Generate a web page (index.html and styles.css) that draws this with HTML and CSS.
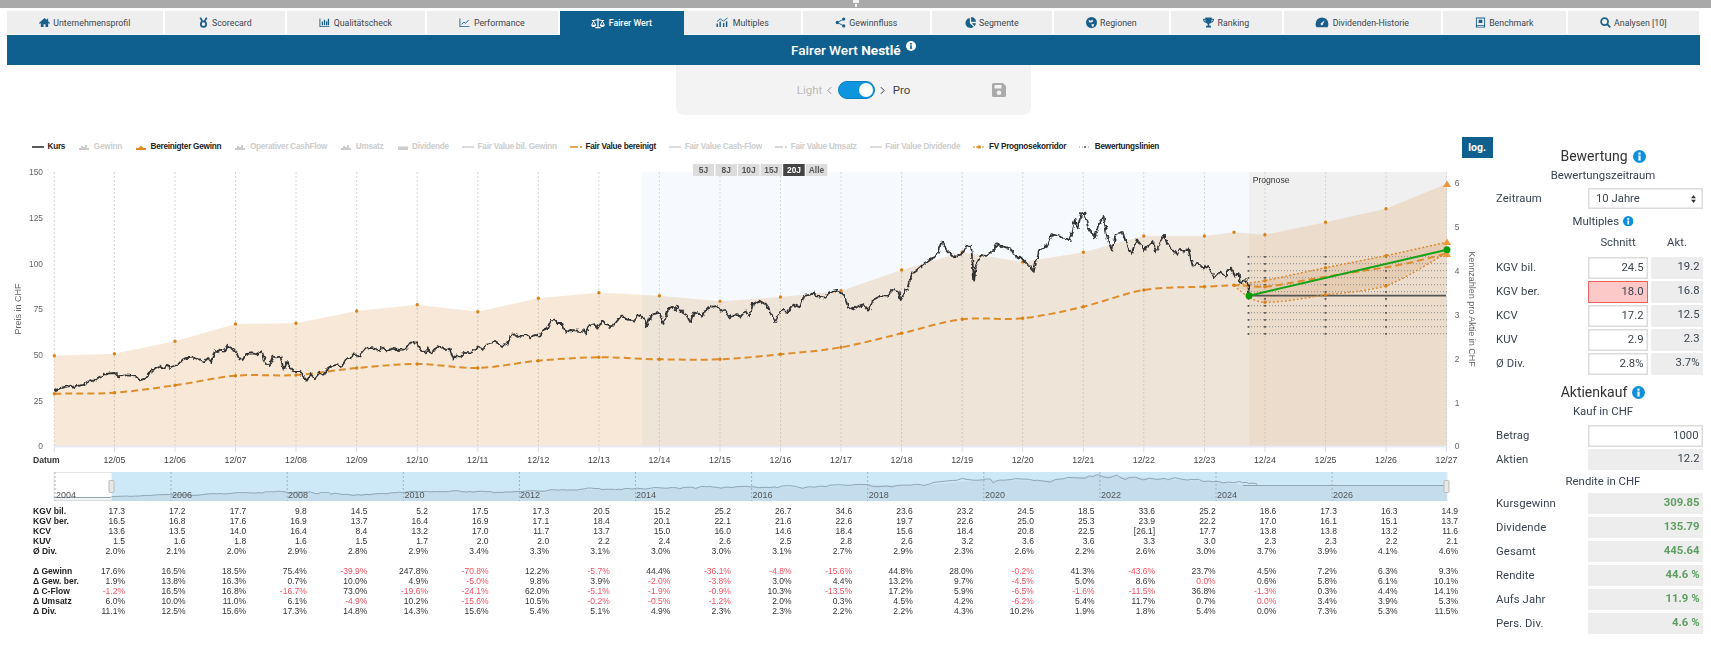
FILE: index.html
```html
<!DOCTYPE html>
<html lang="de">
<head>
<meta charset="utf-8">
<title>Fairer Wert Nestlé</title>
<link rel="stylesheet" href="styles.css">
</head>
<body>
<svg class="defs" width="0" height="0" aria-hidden="true">
  <filter id="jitter" x="-2%" y="-10%" width="104%" height="120%"><feTurbulence type="fractalNoise" baseFrequency=".28 .2" numOctaves="2" seed="4"/><feDisplacementMap in="SourceGraphic" scale="4.500" xChannelSelector="R" yChannelSelector="G"/></filter>
  <symbol id="info" viewBox="0 0 12 12"><circle cx="6" cy="6" r="6"/><g class="info-i"><rect x="5" y="2.3" width="2" height="2"/><rect x="5" y="5.1" width="2" height="4.6"/></g></symbol>
  <symbol id="lg-area" viewBox="0 0 12 8"><path d="M1 7V5h2V3h2v1h2V2h2v3h2v2z"/></symbol>
  <symbol id="lg-flat" viewBox="0 0 12 8"><path d="M1 3.5h10v3.5H1z"/></symbol>
  <g id="price">
    <path class="ps" transform="matrix(.3827 0 0 .3333 0 160)" d="M142 693L150 688 160 684 172 680 185 677 192 684 205 677 218 675 225 668 237 660 245 664 258 652 270 645 285 640 300 639 312 652 322 646 340 647 355 650 365 661 378 656 390 640 405 625 418 617 428 624 438 615 446 624 462 618 478 598 490 594 505 593 520 598 532 606 544 594 552 606 562 570 570 576 578 569 585 575 595 557 605 566 615 572 625 597 634 600 643 582 660 580 672 583 684 574 695 610 704 618 712 590 722 592 733 590 741 632 750 606 760 622 770 636 785 636 793 650 802 662 812 642 822 656 835 638 845 644 858 626 868 618 880 615 893 620 905 596 918 592 925 580 935 590 945 580 958 562 975 565 988 572 1000 562 1012 574 1025 566 1040 570 1060 568 1072 548 1088 547 1097 570 1110 578 1120 565 1124 582 1135 568 1150 557 1165 570 1175 566 1185 598 1195 585 1205 592 1215 575 1232 578 1250 562 1262 568 1275 550 1295 546 1312 558 1325 555 1335 528 1345 522 1358 532 1372 522 1385 532 1400 525 1410 530 1420 510 1430 505 1440 480 1450 482 1458 492 1470 492 1478 518 1490 510 1510 512 1515 518"/>
    <path class="ps" transform="matrix(.3827 0 0 .3333 580 160)" d="M0 518L10 508 15 520 25 495 35 490 45 506 58 484 72 498 82 503 95 486 108 467 125 478 140 485 155 465 168 478 175 500 185 465 208 458 218 492 232 445 242 440 250 450 255 438 268 458 278 465 288 486 298 458 310 460 318 470 330 448 345 440 358 438 368 452 375 448 390 472 410 462 420 470 432 452 442 472 452 432 468 422 488 435 498 460 510 486 522 456 532 450 540 460 558 434 575 442 585 408 600 405 610 398 622 410 642 413 650 398 668 390 680 395 690 405 700 440 715 448 725 440 740 432 755 452 765 420 785 408 805 410 815 390 832 395 838 420 855 385 868 340 880 330 900 310 918 296 930 290 945 245 958 270 975 288 985 290 1000 280 1010 260 1022 260 1030 362 1035 315 1048 285 1060 288 1080 270 1090 250 1105 260 1125 265 1140 295 1150 290 1165 308 1185 335 1200 270 1220 255 1232 222 1250 228 1280 240 1292 180 1300 205 1310 160 1318 158 1328 205 1345 232 1358 185 1368 168 1378 235 1390 272 1400 222 1418 216 1430 262 1440 282 1455 238 1475 270 1498 245 1505 278 1525 225 1540 260 1560 285 1568 265"/>
    <path class="ps" transform="matrix(.3333 0 0 .3333 1140 160)" d="M120 268L130 275 145 268 158 318 175 310 190 325 205 318 222 352 238 335 255 350 272 320 282 350 296 340 300 368 315 360 325 372 327 405"/>
  </g>
</svg>

<div class="topbar"><svg class="grip" viewBox="0 0 6 7"><path d="M0 0h6v3H0zM2 4h2v3H2z"/></svg></div>

<nav class="tabs">
  <a class="tab"><svg class="ti" viewBox="0 0 12 12"><path d="M6 1L0 6.5l1 1 1-.9V11h3V8h2v3h3V6.6l1 .9 1-1-2-1.8V2H8.5v1.4z"/></svg>Unternehmensprofil</a>
  <a class="tab"><svg class="ti" viewBox="0 0 12 12"><path class="st" d="M2.5 .6L4.6 4.6M9.500 .6L7.400 4.600"/><circle class="st" cx="6" cy="7.800" r="2.900"/></svg>Scorecard</a>
  <a class="tab"><svg class="ti" viewBox="0 0 12 12"><path d="M.5 1.500h1v8.500h10v1H.5zM3 5h1.400v4H3zM5.300 3h1.400v6H5.300zM7.600 4.500H9V9H7.600zM9.600 2H11v7H9.600z"/></svg>Qualitätscheck</a>
  <a class="tab"><svg class="ti" viewBox="0 0 12 12"><path d="M.5 1.500h1v8.500h10v1H.5z"/><path class="st thin" d="M3 8l2.500-2.500 1.500 1.500 3.500-3.800"/></svg>Performance</a>
  <a class="tab on"><svg class="ti wide" viewBox="0 0 16 12"><path d="M7.300 0h1.400v1.200l4 .8h2.300v1h-1.600l2.400 4.700c0 1.500-1.500 2.300-2.800 2.300s-2.800-.8-2.800-2.300L12.600 3 8.700 2.300V10h2.300v1.500H5V10h2.300V2.300L3.400 3l2.400 4.700C5.800 9.200 4.300 10 3 10S.2 9.200.2 7.700L2.600 3H1V2h2.300l4-.8zM3 4.300L1.400 7.500h3.200zM13 4.300l-1.600 3.200h3.200z"/></svg>Fairer Wert</a>
  <a class="tab"><svg class="ti wide" viewBox="0 0 14 12"><path d="M1 7h1.600v4H1zM4.200 5h1.600v6H4.200zM8 6.500h1.600V11H8zM11.200 4.500h1.600V11h-1.600z"/><path class="st thin" d="M1.500 5L5 2l3.500 2.500L13 1"/></svg>Multiples</a>
  <a class="tab"><svg class="ti" viewBox="0 0 12 12"><circle cx="2.500" cy="6" r="1.800"/><circle cx="9.500" cy="2.300" r="1.800"/><circle cx="9.500" cy="9.700" r="1.800"/><path class="st thin" d="M2.500 6l7-3.700M2.500 6l7 3.700"/></svg>Gewinnfluss</a>
  <a class="tab"><svg class="ti" viewBox="0 0 12 12"><path d="M5.300 1v5.700l4.200 4A5.500 5.500 0 1 1 5.300 1zM6.700 0A5.300 5.300 0 0 1 12 5.300H6.700zM7.300 6.700H12a5.500 5.500 0 0 1-1.500 3.200z"/></svg>Segmente</a>
  <a class="tab"><svg class="ti" viewBox="0 0 12 12"><path fill-rule="evenodd" d="M6 0a6 6 0 1 1 0 12A6 6 0 0 1 6 0zM3 3l2 1 2-1 1 1.500-2 1.500H4L3 4.500zM6 7.500l3 .5-1 2.500H6.500z"/></svg>Regionen</a>
  <a class="tab"><svg class="ti" viewBox="0 0 12 12"><path fill-rule="evenodd" d="M2.500 .5h7v1.300H12C12 4.500 10.500 6 8.800 6.300 8 7 7.200 7.300 6.900 7.400V9.500h1.800V11.500H3.300V9.500h1.800V7.400C4.800 7.300 4 7 3.200 6.300 1.500 6 0 4.500 0 1.800h2.500zM1.200 3c.2 1 .8 1.700 1.800 2.100-.2-.6-.4-1.300-.5-2.100zM10.800 3H9.500c-.1.800-.3 1.500-.5 2.100 1-.4 1.600-1.100 1.800-2.100z"/></svg>Ranking</a>
  <a class="tab"><svg class="ti wide" viewBox="0 0 14 12"><path fill-rule="evenodd" d="M7 .5a7 7 0 0 1 7 7c0 1.400-.3 2.700-1 3.800H1C.3 10.200 0 8.900 0 7.500a7 7 0 0 1 7-7zM6.200 6.500a1.300 1.300 0 1 0 1.900 1L10 3.500z"/></svg>Dividenden-Historie</a>
  <a class="tab"><svg class="ti" viewBox="0 0 12 12"><path fill-rule="evenodd" d="M1 .5h10v11H1zM2 1.500v7.500h8V1.500zM2.300 9.800v.8h7.400v-.8zM4 3h4v3.500H4z"/></svg>Benchmark</a>
  <a class="tab"><svg class="ti" viewBox="0 0 12 12"><circle class="st" cx="5" cy="5" r="3.800"/><path class="st" d="M7.800 7.800l3.400 3.400"/></svg>Analysen [10]</a>
</nav>

<header class="banner">
  <h1 class="title">Fairer Wert <strong>Nestlé</strong></h1>
  <svg class="title-info"><use href="#info"/></svg>
</header>

<div class="mode-wrap">
  <div class="mode">
    <span class="mode-light">Light</span>
    <svg class="chev light" viewBox="0 0 6 10"><path d="M5 1L1 5l4 4"/></svg>
    <span class="switch"><span class="knob"></span></span>
    <svg class="chev" viewBox="0 0 6 10"><path d="M1 1l4 4-4 4"/></svg>
    <span class="mode-pro">Pro</span>
    <svg class="save" viewBox="0 0 14 14"><path fill-rule="evenodd" d="M1.500 0H11l3 3v9.500a1.500 1.500 0 0 1-1.500 1.500h-11A1.500 1.500 0 0 1 0 12.500v-11A1.500 1.500 0 0 1 1.500 0zM2.500 2v3.500h7V2zM7 7.500a2.300 2.300 0 1 0 0 4.600 2.300 2.300 0 0 0 0-4.600z"/></svg>
  </div>
</div>

<main class="main">
  <section class="left">
    <div class="legend">
      <span class="li on"><svg class="lg"><path class="k2" d="M0 4h12"/></svg>Kurs</span>
      <span class="li"><svg class="lg off"><use href="#lg-area"/></svg>Gewinn</span>
      <span class="li on"><svg class="lg" viewBox="0 0 12 8"><path class="of" d="M1 7V5h2.500L6 2.500 8.500 5H11v2z"/></svg>Bereinigter Gewinn</span>
      <span class="li"><svg class="lg off"><use href="#lg-area"/></svg>Operativer CashFlow</span>
      <span class="li"><svg class="lg off"><use href="#lg-area"/></svg>Umsatz</span>
      <span class="li"><svg class="lg off"><use href="#lg-flat"/></svg>Dividende</span>
      <span class="li"><svg class="lg"><path class="g2" d="M0 4h12"/></svg>Fair Value bil. Gewinn</span>
      <span class="li on"><svg class="lg"><path class="o2" d="M0 4h8M10 4h2"/></svg>Fair Value bereinigt</span>
      <span class="li"><svg class="lg"><path class="g2" d="M0 4h12"/></svg>Fair Value Cash-Flow</span>
      <span class="li"><svg class="lg"><path class="g2" d="M0 4h8M10 4h2"/></svg>Fair Value Umsatz</span>
      <span class="li"><svg class="lg"><path class="g2" d="M0 4h12"/></svg>Fair Value Dividende</span>
      <span class="li on"><svg class="lg"><path class="o1" d="M0 4h12"/><circle class="of" cx="6" cy="4" r="1.800"/></svg>FV Prognosekorridor</span>
      <span class="li on"><svg class="lg"><path class="d1" d="M0 4h12"/><circle cx="6" cy="4" r="1"/></svg>Bewertungslinien</span>
      <button class="log">log.</button>
    </div>

    <svg class="chart" viewBox="0 160 1480 345" width="1480" height="345" role="img" aria-label="Kursverlauf">
      <rect class="band-blue" x="642" y="172" width="607" height="274"/>
      <rect class="band-grey" x="1249" y="172" width="198" height="274"/>
      <path class="grid" d="M54.300 172V446M114.400 172V446M175 172V446M235.500 172V446M296 172V446M356.700 172V446M417.200 172V446M477.800 172V446M538.300 172V446M598.900 172V446M659.400 172V446M720 172V446M780.500 172V446M841 172V446M901.600 172V446M962.200 172V446M1022.700 172V446M1083.300 172V446M1143.800 172V446M1204.400 172V446M1264.900 172V446M1325.500 172V446M1386 172V446M1446.500 172V446"/>
      <path class="area" d="M54.300 355.700L114.400 353.700 175 341.300 235.500 324 296 323.300 356.700 311 417.200 304.700 477.800 311.700 538.300 298.300 598.900 292.700 659.400 295.700 720 301.300 780.500 297 841 290.700 901.600 270 962.200 252.300 1022.700 262 1083.300 252.300 1143.800 236 1204.400 236 1234 232.300 1264.900 234.700 1325.500 222.300 1386 208.700 1446.500 184V446H54.300z"/>
      <path class="axis" d="M54 446.500H1447"/>
      <path class="ticks" d="M54.300 447v5M114.400 447v5M175 447v5M235.500 447v5M296 447v5M356.700 447v5M417.200 447v5M477.800 447v5M538.300 447v5M598.900 447v5M659.400 447v5M720 447v5M780.500 447v5M841 447v5M901.600 447v5M962.200 447v5M1022.700 447v5M1083.300 447v5M1143.800 447v5M1204.400 447v5M1264.900 447v5M1325.500 447v5M1386 447v5M1446.500 447v5"/>

      <path class="corr-fill" d="M1234 285.300L1264.900 280.700 1325.500 267.700 1386 255.700 1446.500 242.300V253.300L1386 286 1325.500 294.700 1264.900 302.300z"/>
      <path class="lines" d="M1248 256.700H1447M1248 263.700H1447M1248 270.700H1447M1248 277.700H1447M1248 284.700H1447M1248 291.700H1447M1248 305.700H1447M1248 312.700H1447M1248 319.700H1447M1248 326.700H1447M1248 333.700H1447"/>
      <path class="lines-mk" d="M1265 256V335M1325.500 256V335M1386 256V335M1248.500 256V335"/>
      <path class="flat" d="M1249 295.700H1446"/>

      <path class="fv" d="M54.300 393.700C74 393.400 94.400 394.100 114.400 392.700S155 388.100 175 385.300 215.500 377.400 235.500 375.700 276 376.300 296 375 336.700 369.800 356.700 368 397.200 364 417.200 364 457.800 368.500 477.800 368 518.300 362.500 538.300 360.700 578.900 357.500 598.900 357.300 639.400 359 659.400 359.300 700 360.100 720 359.300 760.500 356.300 780.500 354.300 821 350.800 841 347.300 881.600 338 901.600 333.300 942.200 321.800 962.200 319.300 1002.700 320.400 1022.700 318.300 1063.300 311.400 1083.300 306.700 1123.800 293.300 1143.800 290 1184.400 287.500 1204.400 286.700 1224 285.500 1234 285.300 1255 287 1264.900 286.700 1305 280 1325.500 276.700 1365 270.500 1386 267.300 1430 258 1446.500 253.300"/>
      <path class="corr" d="M1234 285.300L1264.900 280.700 1325.500 267.700 1386 255.700 1446.500 242.300M1234 285.300C1245 296 1255 302 1264.900 302.300 1285 302 1305 298 1325.500 294.700 1345 293 1365 291 1386 286 1410 276 1430 262 1446.500 253.300"/>
      <path class="dots" d="M54.300 355.700h0M114.400 353.700h0M175 341.300h0M235.500 324h0M296 323.300h0M356.700 311h0M417.200 304.700h0M477.800 311.700h0M538.300 298.300h0M598.900 292.700h0M659.400 295.700h0M720 301.300h0M780.500 297h0M841 290.700h0M901.600 270h0M962.200 252.300h0M1022.700 262h0M1083.300 252.300h0M1143.800 236h0M1204.400 236h0M1234 232.300h0M1264.900 234.700h0M1325.500 222.300h0M1386 208.700h0M54.300 393.700h0M114.400 392.700h0M175 385.300h0M235.500 375.700h0M296 375h0M356.700 368h0M417.200 364h0M477.800 368h0M538.300 360.700h0M598.900 357.300h0M659.400 359.300h0M720 359.300h0M780.500 354.300h0M841 347.300h0M901.600 333.300h0M962.200 319.300h0M1022.700 318.300h0M1083.300 306.700h0M1143.800 290h0M1204.400 286.700h0M1234 285.300h0M1264.900 280.700h0M1325.500 267.700h0M1386 255.700h0M1264.900 302.300h0M1325.500 294.700h0M1386 286h0M1264.900 286.700h0"/>
      <use href="#price" class="kurs"/>
      <path class="green" d="M1249 295.700L1447 249.700"/>
      <circle class="green-dot" cx="1249" cy="295.700" r="3.500"/>
      <path class="tri" d="M1447 180.500l4 6.500h-8zM1447 238.500l4 6.500h-8zM1447 250.500l4 6.500h-8z"/>
      <circle class="green-dot" cx="1447" cy="249.700" r="3.500"/>

      <text class="tt" x="1252.700" y="182.500">Prognose</text>

      <g class="rs">
        <rect x="693" y="164" width="21" height="12"/><text x="703.500" y="173">5J</text>
        <rect x="715.500" y="164" width="21.500" height="12"/><text x="726.200" y="173">8J</text>
        <rect x="738" y="164" width="21.500" height="12"/><text x="748.700" y="173">10J</text>
        <rect x="760.600" y="164" width="21.500" height="12"/><text x="771.300" y="173">15J</text>
        <rect class="sel" x="783.200" y="164" width="21.500" height="12"/><text class="sel" x="794" y="173">20J</text>
        <rect x="805.800" y="164" width="21.500" height="12"/><text x="816.500" y="173">Alle</text>
      </g>

      <g class="yl">
        <text x="43" y="175">150</text><text x="43" y="221">125</text><text x="43" y="267">100</text><text x="43" y="312">75</text><text x="43" y="358">50</text><text x="43" y="404">25</text><text x="43" y="449">0</text>
      </g>
      <g class="yr">
        <text x="1457" y="186">6</text><text x="1457" y="230">5</text><text x="1457" y="274">4</text><text x="1457" y="318">3</text><text x="1457" y="362">2</text><text x="1457" y="406">1</text><text x="1457" y="449">0</text>
      </g>
      <text class="yt" transform="translate(21 309) rotate(-90)">Preis in CHF</text>
      <text class="yt" transform="translate(1469 309) rotate(90)">Kennzahlen pro Aktie in CHF</text>

      <text class="datum" x="33" y="463">Datum</text>
      <g class="xl">
        <text x="114.400" y="463">12/05</text><text x="175" y="463">12/06</text><text x="235.500" y="463">12/07</text><text x="296" y="463">12/08</text><text x="356.700" y="463">12/09</text><text x="417.200" y="463">12/10</text><text x="477.800" y="463">12/11</text><text x="538.300" y="463">12/12</text><text x="598.900" y="463">12/13</text><text x="659.400" y="463">12/14</text><text x="720" y="463">12/15</text><text x="780.500" y="463">12/16</text><text x="841" y="463">12/17</text><text x="901.600" y="463">12/18</text><text x="962.200" y="463">12/19</text><text x="1022.700" y="463">12/20</text><text x="1083.300" y="463">12/21</text><text x="1143.800" y="463">12/22</text><text x="1204.400" y="463">12/23</text><text x="1264.900" y="463">12/24</text><text x="1325.500" y="463">12/25</text><text x="1386" y="463">12/26</text><text x="1446.500" y="463">12/27</text>
      </g>

      <rect class="nav-bg" x="54" y="472.500" width="1393" height="28"/>
      <rect class="nav-sel" x="111.600" y="472" width="1335" height="29"/>
      <path class="nav-area" d="M54 497.500L111 497.300 169 494.500 227 493.700 285 491.800 343 494.400 401 492.300 459 490.800 517 491.600 575 489.900 633 489.300 692 487.200 750 486.600 808 487.700 866 484.600 924 485.300 982 480 1040 480.700 1098 475 1156 478.600 1214 481.400 1243 485 1447 485.500V501H54z"/>
      <path class="nav-grid" d="M55 472V501M171 472V501M287.200 472V501M403.300 472V501M519.400 472V501M635.500 472V501M751.600 472V501M867.700 472V501M983.800 472V501M1099.900 472V501M1216 472V501M1332.100 472V501"/>
      <path class="nav-line" d="M54 497.500H111"/>
      <use href="#price" class="nav-price" transform="matrix(.9587 0 0 .1226 59.500 448.800)"/>
      <path class="nav-line" d="M1243 485.500H1447"/>
      <g class="nl">
        <text x="56" y="498">2004</text><text x="172" y="498">2006</text><text x="288" y="498">2008</text><text x="404.500" y="498">2010</text><text x="520" y="498">2012</text><text x="636" y="498">2014</text><text x="752.600" y="498">2016</text><text x="868.800" y="498">2018</text><text x="985" y="498">2020</text><text x="1101" y="498">2022</text><text x="1217" y="498">2024</text><text x="1333" y="498">2026</text>
      </g>
      <rect class="nav-h" x="109" y="480.500" width="5" height="12" rx="1"/>
      <rect class="nav-h" x="1444" y="480.500" width="5" height="12" rx="1"/>
    </svg>

    <div class="tbl">
      <div class="tr"><b>KGV bil.</b><span>17.3</span><span>17.2</span><span>17.7</span><span>9.8</span><span>14.5</span><span>5.2</span><span>17.5</span><span>17.3</span><span>20.5</span><span>15.2</span><span>25.2</span><span>26.7</span><span>34.6</span><span>23.6</span><span>23.2</span><span>24.5</span><span>18.5</span><span>33.6</span><span>25.2</span><span>18.6</span><span>17.3</span><span>16.3</span><span>14.9</span></div>
      <div class="tr"><b>KGV ber.</b><span>16.5</span><span>16.8</span><span>17.6</span><span>16.9</span><span>13.7</span><span>16.4</span><span>16.9</span><span>17.1</span><span>18.4</span><span>20.1</span><span>22.1</span><span>21.6</span><span>22.6</span><span>19.7</span><span>22.6</span><span>25.0</span><span>25.3</span><span>23.9</span><span>22.2</span><span>17.0</span><span>16.1</span><span>15.1</span><span>13.7</span></div>
      <div class="tr"><b>KCV</b><span>13.6</span><span>13.5</span><span>14.0</span><span>16.4</span><span>8.4</span><span>13.2</span><span>17.0</span><span>11.7</span><span>13.7</span><span>15.0</span><span>16.0</span><span>14.6</span><span>18.4</span><span>15.6</span><span>18.4</span><span>20.8</span><span>22.5</span><span>[26.1]</span><span>17.7</span><span>13.8</span><span>13.8</span><span>13.2</span><span>11.6</span></div>
      <div class="tr"><b>KUV</b><span>1.5</span><span>1.6</span><span>1.8</span><span>1.6</span><span>1.5</span><span>1.7</span><span>2.0</span><span>2.0</span><span>2.2</span><span>2.4</span><span>2.6</span><span>2.5</span><span>2.8</span><span>2.6</span><span>3.2</span><span>3.6</span><span>3.6</span><span>3.3</span><span>3.0</span><span>2.3</span><span>2.3</span><span>2.2</span><span>2.1</span></div>
      <div class="tr"><b>Ø Div.</b><span>2.0%</span><span>2.1%</span><span>2.0%</span><span>2.9%</span><span>2.8%</span><span>2.9%</span><span>3.4%</span><span>3.3%</span><span>3.1%</span><span>3.0%</span><span>3.0%</span><span>3.1%</span><span>2.7%</span><span>2.9%</span><span>2.3%</span><span>2.6%</span><span>2.2%</span><span>2.6%</span><span>3.0%</span><span>3.7%</span><span>3.9%</span><span>4.1%</span><span>4.6%</span></div>
      <div class="tr gap"><b>Δ Gewinn</b><span>17.6%</span><span>16.5%</span><span>18.5%</span><span>75.4%</span><span class="n">-39.9%</span><span>247.8%</span><span class="n">-70.8%</span><span>12.2%</span><span class="n">-5.7%</span><span>44.4%</span><span class="n">-36.1%</span><span class="n">-4.8%</span><span class="n">-15.6%</span><span>44.8%</span><span>28.0%</span><span class="n">-0.2%</span><span>41.3%</span><span class="n">-43.6%</span><span>23.7%</span><span>4.5%</span><span>7.2%</span><span>6.3%</span><span>9.3%</span></div>
      <div class="tr"><b>Δ Gew. ber.</b><span>1.9%</span><span>13.8%</span><span>16.3%</span><span>0.7%</span><span>10.0%</span><span>4.9%</span><span class="n">-5.0%</span><span>9.8%</span><span>3.9%</span><span class="n">-2.0%</span><span class="n">-3.8%</span><span>3.0%</span><span>4.4%</span><span>13.2%</span><span>9.7%</span><span class="n">-4.5%</span><span>5.0%</span><span>8.6%</span><span class="n">0.0%</span><span>0.6%</span><span>5.8%</span><span>6.1%</span><span>10.1%</span></div>
      <div class="tr"><b>Δ C-Flow</b><span class="n">-1.2%</span><span>16.5%</span><span>16.8%</span><span class="n">-16.7%</span><span>73.0%</span><span class="n">-19.6%</span><span class="n">-24.1%</span><span>62.0%</span><span class="n">-5.1%</span><span class="n">-1.9%</span><span class="n">-0.9%</span><span>10.3%</span><span class="n">-13.5%</span><span>17.2%</span><span>5.9%</span><span class="n">-6.5%</span><span class="n">-1.6%</span><span class="n">-11.5%</span><span>36.8%</span><span class="n">-1.3%</span><span>0.3%</span><span>4.4%</span><span>14.1%</span></div>
      <div class="tr"><b>Δ Umsatz</b><span>6.0%</span><span>10.0%</span><span>11.0%</span><span>6.1%</span><span class="n">-4.9%</span><span>10.2%</span><span class="n">-15.6%</span><span>10.5%</span><span class="n">-0.2%</span><span class="n">-0.5%</span><span class="n">-1.2%</span><span>2.0%</span><span>0.3%</span><span>4.5%</span><span>4.2%</span><span class="n">-6.2%</span><span>5.4%</span><span>11.7%</span><span>0.7%</span><span class="n">0.0%</span><span>3.4%</span><span>3.9%</span><span>5.3%</span></div>
      <div class="tr"><b>Δ Div.</b><span>11.1%</span><span>12.5%</span><span>15.6%</span><span>17.3%</span><span>14.8%</span><span>14.3%</span><span>15.6%</span><span>5.4%</span><span>5.1%</span><span>4.9%</span><span>2.3%</span><span>2.3%</span><span>2.2%</span><span>2.2%</span><span>4.3%</span><span>10.2%</span><span>1.9%</span><span>1.8%</span><span>5.4%</span><span>0.0%</span><span>7.3%</span><span>5.3%</span><span>11.5%</span></div>
    </div>
  </section>

  <aside class="side">
    <h2 class="h h-first">Bewertung <svg class="info"><use href="#info"/></svg></h2>
    <div class="sub">Bewertungszeitraum</div>
    <div class="row sel-row"><span class="lab">Zeitraum</span><div class="select wide">10 Jahre<svg class="sel-arrows" viewBox="0 0 6 10"><path d="M3 0l3 4H0zM3 10L0 6h6z"/></svg></div></div>
    <div class="sub mult">Multiples <svg class="info sm"><use href="#info"/></svg></div>
    <div class="row head"><span></span><span class="c">Schnitt</span><span class="c">Akt.</span></div>
    <div class="row"><span class="lab">KGV bil.</span><div class="box">24.5</div><div class="val">19.2</div></div>
    <div class="row"><span class="lab">KGV ber.</span><div class="box bad">18.0</div><div class="val">16.8</div></div>
    <div class="row"><span class="lab">KCV</span><div class="box">17.2</div><div class="val">12.5</div></div>
    <div class="row"><span class="lab">KUV</span><div class="box">2.9</div><div class="val">2.3</div></div>
    <div class="row"><span class="lab">Ø Div.</span><div class="box">2.8%</div><div class="val">3.7%</div></div>
    <h2 class="h h-second">Aktienkauf <svg class="info"><use href="#info"/></svg></h2>
    <div class="sub">Kauf in CHF</div>
    <div class="row betrag"><span class="lab">Betrag</span><div class="box wide">1000</div></div>
    <div class="row"><span class="lab">Aktien</span><div class="val wide">12.2</div></div>
    <div class="sub rend">Rendite in CHF</div>
    <div class="row"><span class="lab">Kursgewinn</span><div class="val wide good">309.85</div></div>
    <div class="row"><span class="lab">Dividende</span><div class="val wide good">135.79</div></div>
    <div class="row"><span class="lab">Gesamt</span><div class="val wide good">445.64</div></div>
    <div class="row"><span class="lab">Rendite</span><div class="val wide good">44.6 %</div></div>
    <div class="row"><span class="lab">Aufs Jahr</span><div class="val wide good">11.9 %</div></div>
    <div class="row"><span class="lab">Pers. Div.</span><div class="val wide good">4.6 %</div></div>
  </aside>
</main>
</body>
</html>
```
FILE: styles.css
```css
* { box-sizing: border-box; }
html, body { margin: 0; padding: 0; background: #fff; }
body { font-family: Roboto, "Liberation Sans", sans-serif; color: #333; width: 1711px; overflow-x: hidden; filter: blur(.35px); }
.defs { position: absolute; }
.info-i rect { fill: var(--in, #fff); }

.topbar { height: 8px; background: #a9a9a9; display: flex; justify-content: center; margin-bottom: 3px; }
.grip { width: 6px; height: 7px; fill: #fff; opacity: .85; }

.tabs { display: grid; grid-template-columns: 158px 122px 140px 133px 124px 119px 129px 122px 117px 113px 159px 125px 133px; margin-left: 6.6px; height: 24px; }
.tab { display: flex; align-items: center; justify-content: center; gap: 3.5px; background: #eee; border-right: 2px solid #fff; font-size: 8.8px; color: #3c4650; height: 23px; }
.tab.on { background: #0f5f8f; color: #fff; border-right: 0; height: 24px; font-weight: 500; }
.ti { width: 11px; height: 11px; fill: #1a5f8c; flex: none; }
.ti.wide { width: 14px; }
.on .ti { fill: #fff; }
.ti .st { fill: none; stroke: #1a5f8c; stroke-width: 1.9; }
.ti .st.thin { stroke-width: 1; }

.banner { margin-left: 6.6px; width: 1693.4px; height: 30px; background: #0f5f8f; color: #fff; display: flex; justify-content: center; align-items: center; }
.title { font-size: 13.6px; font-weight: 500; margin: 0; }
.title strong { font-weight: 700; }
.title-info { width: 10px; height: 10px; color: #fff; fill: #fff; --in: #0f5f8f; margin: -9px 0 0 5px; }

.mode-wrap { display: flex; justify-content: center; margin-left: 6.6px; width: 1693.4px; }
.mode { width: 355px; height: 50px; background: #f3f3f3; border-radius: 0 0 8px 8px; display: flex; align-items: center; padding: 0 0 0 121px; font-size: 11.5px; }
.mode-light { color: #bbb; width: 26px; }
.chev { width: 5px; height: 9px; fill: none; stroke: #999; stroke-width: 1.200; margin-left: 4px; }
.chev:not(.light) { stroke: #333; margin-left: 5px; }
.switch { width: 37px; height: 18px; background: #0d95e0; border-radius: 9px; margin-left: 6px; position: relative; border: 1px solid #0d7fc0; }
.knob { position: absolute; right: 1px; top: 1px; width: 14px; height: 14px; border-radius: 50%; background: #fff; }
.mode-pro { margin-left: 8px; color: #444; }
.save { width: 14px; height: 14px; fill: #aaa; margin-left: 82px; }

.main { display: flex; margin-top: 22px; }
.left { width: 1496px; flex: none; }
.legend { height: 21px; display: flex; align-items: center; padding: 0 3.3px 0 32px; font: 700 8.2px "Liberation Sans", sans-serif; letter-spacing: -.25px; color: #ccc; white-space: nowrap; margin-bottom: 2px; }
.li { display: flex; align-items: center; gap: 3.5px; margin-right: 13.2px; margin-bottom: 1.5px; }
.li.on { color: #222; }
.lg { width: 12px; height: 8px; fill: #555; flex: none; }
.lg.off { fill: #ccc; }
.lg .of { fill: #e08a20; }
.lg .k2 { stroke: #333; stroke-width: 1.6; }
.lg .g2 { stroke: #ccc; stroke-width: 1.4; }
.lg .o2 { stroke: #e08a20; stroke-width: 1.6; }
.lg .o1 { stroke: #e08a20; stroke-width: 1; stroke-dasharray: 2 1; }
.lg .d1 { stroke: #999; stroke-width: 1; stroke-dasharray: 1 2; }
.log { margin-left: auto; width: 31px; height: 21px; padding: 0; border: 0; background: #0f5f8f; color: #fff; font: 700 10.5px Roboto, sans-serif; letter-spacing: 0; }

.chart { display: block; font-family: "Liberation Sans", sans-serif; }
.band-blue { fill: #f6faff; }
.band-grey { fill: #f0f0f0; }
.grid { stroke: #d6d6d6; stroke-width: 1; stroke-dasharray: 2 2; fill: none; }
.area { fill: rgba(214, 140, 60, .2); }
.axis { stroke: #e6e9f5; stroke-width: 2; }
.ticks { stroke: #d8deee; stroke-width: 1; }
.corr-fill { fill: rgba(200, 125, 45, .16); }
.lines { stroke: #8a8a8a; stroke-width: 1; stroke-dasharray: 1 2; fill: none; }
.lines-mk { stroke: #555; stroke-width: 1.800; stroke-dasharray: 1.800 5.200; fill: none; }
.flat { stroke: #555; stroke-width: 1.800; }
.fv { fill: none; stroke: #dd8d2b; stroke-width: 2; stroke-dasharray: 7 4; }
.corr { fill: none; stroke: #d88a2c; stroke-width: 1.400; stroke-dasharray: 2 2; }
.dots { stroke: #d9821a; stroke-width: 3.400; stroke-linecap: round; fill: none; }
.kurs { fill: none; stroke: #333; stroke-width: 1.800; stroke-linejoin: round; filter: url(#jitter); }
.ps { vector-effect: non-scaling-stroke; }
.green { stroke: #17a217; stroke-width: 2; }
.green-dot { fill: #0d9c0d; }
.tri { fill: #f0963c; }
.tt { font-size: 8.6px; fill: #333; }
.rs rect { fill: #dcdcdc; }
.rs rect.sel { fill: #444; }
.rs text { font-size: 8.4px; font-weight: 700; fill: #555; text-anchor: middle; }
.rs text.sel { fill: #fff; }
.yl text { font-size: 8.400px; fill: #666; text-anchor: end; }
.yr text { font-size: 8.400px; fill: #666; text-anchor: middle; }
.yt { font-size: 9px; fill: #666; text-anchor: middle; }
.datum { font-size: 8.600px; font-weight: 700; fill: #333; }
.xl text { font-size: 8.800px; fill: #444; text-anchor: middle; }
.nav-bg { fill: #fff; stroke: #e6e6e6; stroke-width: 1; }
.nav-sel { fill: #cde8f7; }
.nav-area { fill: rgba(70, 90, 110, .07); }
.nav-grid { stroke: #9fb4c0; stroke-width: 1; stroke-dasharray: 2 2; }
.nav-line, .nav-price { fill: none; stroke: #8fa6b4; stroke-width: 1; }
.nl text { font-size: 9px; fill: #555; }
.nav-h { fill: #e8e8e8; stroke: #bbb; stroke-width: 1; }

.tbl { margin-top: .5px; padding-left: 33px; font: 8.500px/10px "Liberation Sans", sans-serif; color: #333; }
.tr { display: grid; grid-template-columns: 31.400px repeat(23, 60.600px); height: 10px; white-space: nowrap; }
.tr.gap { margin-top: 10.300px; }
.tr span { text-align: right; }
.tr b { font-weight: 700; color: #222; }
.tr .n { color: #f45060; }

.side { width: 214px; flex: none; font-size: 11.300px; color: #3a4450; }
.h { font-size: 14px; font-weight: 400; margin: 0; height: 20px; line-height: 20px; text-align: center; color: #333; display: flex; justify-content: center; align-items: center; gap: 5px; }
.h-first { margin-top: 9.200px; }
.h-second { margin-top: 8.400px; }
.sub { height: 16px; line-height: 16px; text-align: center; margin-top: 1px; display: flex; justify-content: center; align-items: center; gap: 4px; font-size: 11.400px; }
.info { width: 13px; height: 13px; fill: #0d8fdb; color: #0d8fdb; }
.info.sm { width: 10.500px; height: 10.500px; }
.mult { margin-top: 3.700px; }
.rend { margin-top: 3px; margin-bottom: 4.300px; }
.row { display: grid; grid-template-columns: 89px 60px 52px; column-gap: 3px; height: 21px; margin-bottom: 3px; align-items: stretch; line-height: 21px; width: 204px; }
.sel-row { margin-top: 5px; }
.betrag { margin-top: 6px; }
.head { margin-top: 5.900px; height: 16px; line-height: 16px; margin-bottom: 6px; }
.c { text-align: center; }
.lab { letter-spacing: .1px; }
.box, .val { text-align: right; padding-right: 3.500px; background: #ededed; line-height: 20px; }
.box { background: #fff; border: 1px solid #dcdcdc; box-shadow: inset 0 0 0 .5px #dcdcdc; }
.box.bad { background: #fcc8c8; border-color: #e86060; box-shadow: none; }
.wide { grid-column: 2 / 4; }
.good { color: #5f9e62; font-weight: 700; }
.select { border: 1px solid #dcdcdc; box-shadow: inset 0 0 0 .5px #dcdcdc; padding: 0 6px 0 7px; line-height: 19px; display: flex; justify-content: space-between; align-items: center; }
.sel-arrows { width: 5px; height: 8px; fill: #333; }
```
